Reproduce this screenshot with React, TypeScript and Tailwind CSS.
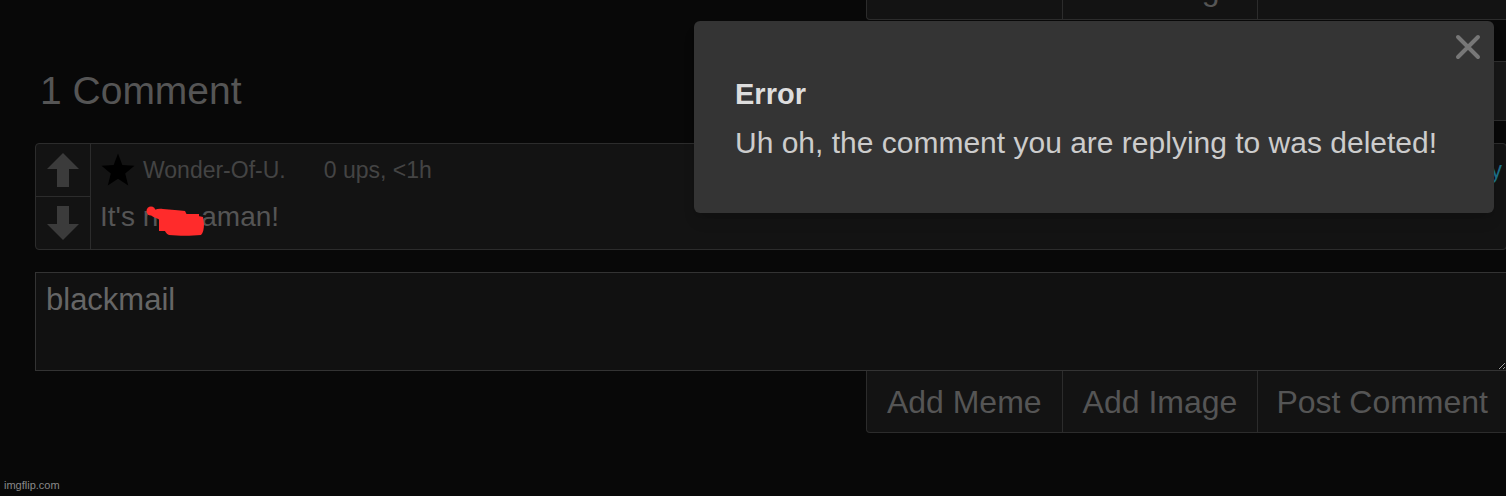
import { useState } from 'react';

const font = { fontFamily: '"Liberation Sans", Arial, Helvetica, sans-serif' };

const ButtonBar = ({ className = '' }: { className?: string }) => (
  <div className={`flex justify-end ${className}`}>
    <div className="flex h-[62px] overflow-hidden rounded-bl-[4px] border border-t-0 border-[#2c2c2c] bg-[#131313] text-[32px] leading-none text-[#555]">
      <button className="flex items-center px-[20px]">Add Meme</button>
      <button className="flex items-center border-l border-[#2c2c2c] px-[20px]">Add Image</button>
      <button className="flex items-center border-l border-[#2c2c2c] px-[18px] whitespace-nowrap">Post Comment</button>
    </div>
  </div>
);

const Arrow = ({ down = false }: { down?: boolean }) => (
  <svg width="32" height="34" viewBox="0 0 32 34" className={down ? 'rotate-180' : ''}>
    <polygon points="16,0 32,16 22,16 22,34 10,34 10,16 0,16" fill="#3b3b3b" />
  </svg>
);

const Star = () => (
  <svg width="36" height="36" viewBox="0 0 24 24">
    <polygon
      points="12,1 14.9,8.6 23,9.2 16.8,14.4 18.8,22.3 12,17.9 5.2,22.3 7.2,14.4 1,9.2 9.1,8.6"
      fill="#000"
    />
  </svg>
);

// red marker over a word in the original screenshot
const Scribble = () => (
  <span className="relative inline-block h-[28px] w-[43px] align-top">
    <svg width="62" height="32" viewBox="0 0 62 32" className="absolute -left-[13px] top-[2px]">
      <circle cx="6" cy="6" r="4.5" fill="#ff2b2b" />
      <path
        d="M5 8 C9 4 14 3 18 4 C26 5 34 5 40 6 L42 10 C48 10 54 11 58 12 L59 19 C59 24 58 28 56 30 C46 31 34 31 24 30 C20 28 19 24 18 20 C17 16 14 14 11 13 C8 12 6 11 5 8 Z"
        fill="#ff2b2b"
      />
      <rect x="14" y="9" width="40" height="17" fill="#ff2b2b" />
    </svg>
  </span>
);

export default function App() {
  const [text] = useState('blackmail');

  return (
    <div style={font} className="relative h-[496px] w-[1506px] overflow-hidden bg-[#080808]">
      <div className="ml-[35px] w-[1472px]">
        <ButtonBar className="-mt-[42px]" />

        <div className="flex h-[123px] items-center justify-between pt-[18px]">
          <h2 className="ml-[5px] text-[39px] leading-none text-[#555]">1 Comment</h2>
          <div className="h-[60px] w-[240px] border-y border-[#2e2e2e] bg-[#171717]" />
        </div>

        <div className="flex h-[107px] rounded-[4px] border border-[#2c2c2c] bg-[#131313]">
          <div className="flex w-[55px] flex-col border-r border-[#2c2c2c]">
            <div className="flex flex-1 items-center justify-center border-b border-[#2c2c2c]">
              <Arrow />
            </div>
            <div className="flex flex-1 items-center justify-center">
              <Arrow down />
            </div>
          </div>
          <div className="flex flex-1 flex-col pl-[9px] pt-[3px]">
            <div className="flex h-[46px] items-center text-[23px] leading-none text-[#444]">
              <Star />
              <span className="ml-[7px]">Wonder-Of-U.</span>
              <span className="ml-[38px]">0 ups, &lt;1h</span>
              <span className="ml-auto pr-[4px] text-[#1d6f88]">reply</span>
            </div>
            <p className="mt-[10px] whitespace-nowrap text-[28px] leading-none text-[#555]">
              It's n<Scribble />aman!
            </p>
          </div>
        </div>

        <textarea
          readOnly
          value={text}
          className="mt-[22px] block h-[99px] w-full border border-[#333] bg-[#111] px-[10px] pt-[11px] text-[31px] leading-none text-[#666] outline-none"
        />

        <ButtonBar />
      </div>

      <div className="absolute left-[694px] top-[21px] h-[192px] w-[800px] rounded-[6px] bg-[#343434] pl-[41px] pt-[59px] shadow-lg">
        <button className="absolute right-[13px] top-[13px]">
          <svg width="26" height="26" viewBox="0 0 26 26">
            <path d="M3 3 L23 23 M23 3 L3 23" stroke="#777" strokeWidth="4" strokeLinecap="round" />
          </svg>
        </button>
        <h3 className="text-[29px] font-bold leading-none text-[#ddd]">Error</h3>
        <p className="mt-[19px] text-[30px] leading-none text-[#ccc]">
          Uh oh, the comment you are replying to was deleted!
        </p>
      </div>

      <span className="absolute bottom-[3px] left-[4px] text-[11px] text-[#888]">imgflip.com</span>
    </div>
  );
}
